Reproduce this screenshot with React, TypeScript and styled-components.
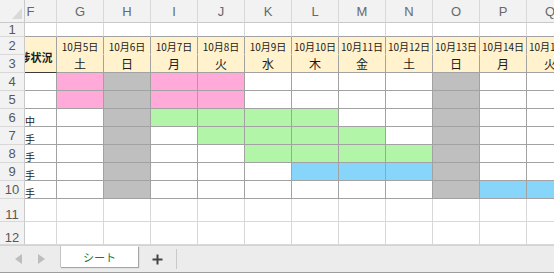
import React from 'react';
import styled, { createGlobalStyle } from 'styled-components';

const GlobalStyle = createGlobalStyle`
  html, body { margin: 0; padding: 0; background: #fff; overflow: hidden; }
  body { font-family: "Noto Sans CJK JP", "Noto Sans", sans-serif; }
`;

const DARK = '#a2a2a2';
const LIGHT = '#d8d8d8';
const HEAD_BG = '#f2f2f2';
const HEAD_EDGE = '#c9c9c9';
const PINK = '#ffaad8';
const GRAY = '#bfbfbf';
const GREEN = '#b2f5a9';
const BLUE = '#88d5fc';
const YELLOW = '#fff2cc';

const Window = styled.div`
  width: 554px;
  height: 273px;
  display: flex;
  flex-direction: column;
  overflow: hidden;
`;

const Sheet = styled.div`
  flex: none;
  width: 554px;
  overflow: hidden;
  display: grid;
  grid-template-columns: 25px 32px repeat(11, 47px);
  grid-template-rows: 23px 14px repeat(9, 18px) 23px 23px;
`;

const Cell = styled.div<{ $bg?: string; $right?: string; $bottom?: string; $span?: number; $edge?: boolean }>`
  box-sizing: border-box;
  min-width: 0;
  overflow: hidden;
  display: flex;
  align-items: center;
  justify-content: ${p => (p.$edge ? 'flex-end' : 'center')};
  background: ${p => p.$bg ?? '#fff'};
  border-right: 1px solid ${p => p.$right ?? LIGHT};
  border-bottom: 1px solid ${p => p.$bottom ?? LIGHT};
  ${p => (p.$span ? `grid-row: span ${p.$span};` : '')}
  color: #1a1a1a;
`;

const Corner = styled.div`
  box-sizing: border-box;
  background: ${HEAD_BG};
  border-right: 1px solid ${HEAD_EDGE};
  border-bottom: 1px solid ${HEAD_EDGE};
  display: flex;
  align-items: flex-end;
  justify-content: flex-end;
  padding: 0 2px 3px 0;
`;

const ColHead = styled.div<{ $edge?: boolean }>`
  box-sizing: border-box;
  min-width: 0;
  overflow: hidden;
  background: ${HEAD_BG};
  border-right: 1px solid ${LIGHT};
  border-bottom: 1px solid ${HEAD_EDGE};
  display: flex;
  align-items: center;
  justify-content: ${p => (p.$edge ? 'flex-end' : 'center')};
  font-family: "Liberation Sans", Arial, sans-serif;
  font-size: 13px;
  color: #686868;
`;

const RowHead = styled.div<{ $tall?: boolean }>`
  box-sizing: border-box;
  background: ${HEAD_BG};
  border-right: 1px solid ${HEAD_EDGE};
  border-bottom: 1px solid ${LIGHT};
  display: flex;
  justify-content: center;
  align-items: ${p => (p.$tall ? 'flex-end' : 'center')};
  font-family: "Liberation Sans", Arial, sans-serif;
  font-size: 13px;
  line-height: 13px;
  color: #585858;
`;

/* full (partly scrolled-away) width of column F */
const FullF = styled.span<{ $align?: string }>`
  flex: none;
  width: 54px;
  box-sizing: border-box;
  padding-left: 3px;
  text-align: ${p => p.$align ?? 'center'};
  white-space: nowrap;
`;

const Title = styled.span`
  font-size: 11px;
  font-weight: 700;
`;

const Status = styled.span`
  font-size: 10px;
  line-height: 12px;
  padding-top: 2px;
`;

const DateText = styled.span`
  font-size: 10px;
  white-space: nowrap;
  padding-top: 2px;
`;

const DayText = styled.span`
  font-size: 12px;
  padding-bottom: 1px;
`;

const TabBar = styled.div`
  flex: 1;
  box-sizing: border-box;
  display: flex;
  align-items: flex-start;
  background: #ececec;
  border-top: 1px solid #d3d3d3;
  border-bottom: 1px solid #9d9d9d;
`;

const Nav = styled.div`
  width: 60px;
  height: 26px;
  display: flex;
  align-items: center;
  gap: 16px;
  padding-left: 15px;
  box-sizing: border-box;
`;

const Tab = styled.div`
  width: 78px;
  height: 21px;
  box-sizing: border-box;
  background: #fff;
  border-left: 1px solid #c4c4c4;
  box-shadow: 1px 1px 1px rgba(0, 0, 0, 0.3);
  display: flex;
  align-items: center;
  justify-content: center;
  font-size: 11px;
  color: #127c3e;
`;

const AddButton = styled.div`
  width: 38px;
  height: 26px;
  display: flex;
  align-items: center;
  justify-content: center;
`;

const Separator = styled.div`
  width: 1px;
  height: 20px;
  margin-top: 3px;
  background: #c9c9c9;
`;

const cols = ['F', 'G', 'H', 'I', 'J', 'K', 'L', 'M', 'N', 'O', 'P', 'Q'];
const dateCols = cols.slice(1);
const weekdays = ['土', '日', '月', '火', '水', '木', '金', '土', '日', '月', '火'];
const holidays = ['H', 'O'];

const fills: Record<number, Record<string, string>> = {
  4: { G: PINK, I: PINK, J: PINK },
  5: { G: PINK, I: PINK, J: PINK },
  6: { I: GREEN, J: GREEN, K: GREEN, L: GREEN },
  7: { J: GREEN, K: GREEN, L: GREEN, M: GREEN },
  8: { K: GREEN, L: GREEN, M: GREEN, N: GREEN },
  9: { L: BLUE, M: BLUE, N: BLUE },
  10: { P: BLUE, Q: BLUE },
};

const statuses: Record<number, string> = {
  6: '進行中',
  7: '未着手',
  8: '未着手',
  9: '未着手',
  10: '未着手',
};

const Arrow = ({ dir }: { dir: 'l' | 'r' }) => (
  <svg width="7" height="10" viewBox="0 0 7 10">
    <path d={dir === 'l' ? 'M7 0 L0 5 L7 10 Z' : 'M0 0 L7 5 L0 10 Z'} fill="#bdbdbd" />
  </svg>
);

export default function App() {
  const body: React.ReactNode[] = [];

  // column header
  body.push(
    <Corner key="corner">
      <svg width="10" height="11" viewBox="0 0 10 11">
        <path d="M10 0 L10 11 L0 11 Z" fill="#d9d9d9" />
      </svg>
    </Corner>
  );
  cols.forEach(c =>
    body.push(
      c === 'F' ? (
        <ColHead key={`h${c}`} $edge>
          <FullF>{c}</FullF>
        </ColHead>
      ) : (
        <ColHead key={`h${c}`}>{c}</ColHead>
      )
    )
  );

  // row 1
  body.push(<RowHead key="r1">1</RowHead>);
  cols.forEach(c => body.push(<Cell key={`1${c}`} $bottom={DARK} />));

  // row 2
  body.push(<RowHead key="r2">2</RowHead>);
  body.push(
    <Cell key="2F" $span={2} $edge $bg={YELLOW} $right={DARK} $bottom="#3a3a3a">
      <FullF>
        <Title>進捗状況</Title>
      </FullF>
    </Cell>
  );
  dateCols.forEach((c, i) =>
    body.push(
      <Cell key={`2${c}`} $bg={YELLOW} $right={DARK} $bottom={YELLOW}>
        <DateText>{`10月${5 + i}日`}</DateText>
      </Cell>
    )
  );

  // row 3
  body.push(<RowHead key="r3">3</RowHead>);
  dateCols.forEach((c, i) =>
    body.push(
      <Cell key={`3${c}`} $bg={YELLOW} $right={DARK} $bottom={DARK}>
        <DayText>{weekdays[i]}</DayText>
      </Cell>
    )
  );

  // rows 4-10
  for (let r = 4; r <= 10; r++) {
    body.push(<RowHead key={`r${r}`}>{r}</RowHead>);
    body.push(
      <Cell key={`${r}F`} $edge $right={DARK} $bottom={DARK}>
        <FullF $align="left">{statuses[r] && <Status>{statuses[r]}</Status>}</FullF>
      </Cell>
    );
    dateCols.forEach(c => {
      const bg = holidays.includes(c) ? GRAY : fills[r]?.[c];
      body.push(<Cell key={`${r}${c}`} $bg={bg} $right={DARK} $bottom={DARK} />);
    });
  }

  // rows 11-12
  for (let r = 11; r <= 12; r++) {
    body.push(
      <RowHead key={`r${r}`} $tall>
        {r}
      </RowHead>
    );
    cols.forEach(c => body.push(<Cell key={`${r}${c}`} />));
  }

  return (
    <>
      <GlobalStyle />
      <Window>
        <Sheet>{body}</Sheet>
        <TabBar>
          <Nav>
            <Arrow dir="l" />
            <Arrow dir="r" />
          </Nav>
          <Tab>シート</Tab>
          <AddButton>
            <svg width="11" height="11" viewBox="0 0 11 11">
              <path d="M5.5 0.5 V10.5 M0.5 5.5 H10.5" stroke="#444" strokeWidth="2" />
            </svg>
          </AddButton>
          <Separator />
        </TabBar>
      </Window>
    </>
  );
}
